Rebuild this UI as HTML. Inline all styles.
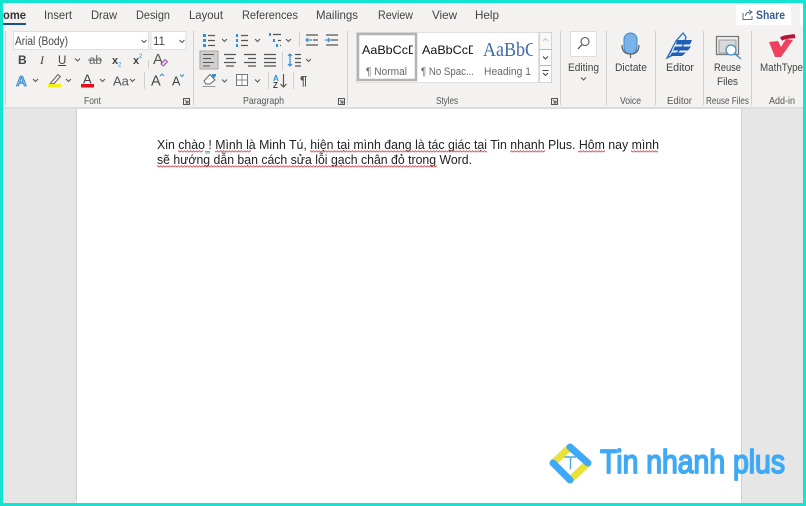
<!DOCTYPE html>
<html><head><meta charset="utf-8"><style>
html,body{margin:0;padding:0;background:#e6e6e6}
svg{display:block;font-family:"Liberation Sans",sans-serif}
.t{font-size:12px;fill:#444}
.s{font-size:10.5px;fill:#555}
.r{font-size:11px;fill:#444}
.d{font-size:13px;fill:#222}
.c{fill:none;stroke:#555;stroke-width:1}
.i{fill:none;stroke:#555;stroke-width:1.2}
.b{fill:none;stroke:#2f8fd8;stroke-width:1.6}
.sep{stroke:#d2d0ce;stroke-width:1}
</style></head><body>
<svg width="806" height="506" viewBox="0 0 806 506" xmlns="http://www.w3.org/2000/svg">
<defs>
<pattern id="sq" width="3" height="3" patternUnits="userSpaceOnUse"><path d="M0 2.200L1.500 .7L3 2.200" fill="none" stroke="#d9484f" stroke-width=".9"/></pattern>
</defs>
<rect width="806" height="506" fill="#e6e6e6"/>
<rect x="77" y="108" width="664" height="398" fill="#fff"/>
<path d="M76.500 108V500M741.500 108V500" stroke="#cfcfcf"/>
<rect x="0" y="0" width="806" height="107" fill="#f3f2f1"/>
<rect x="0" y="107" width="806" height="2" fill="#dcdcdc"/>

<!-- tabs -->
<text x="3" y="19" class="t" style="font-weight:bold;fill:#333" textLength="23" lengthAdjust="spacingAndGlyphs">ome</text>
<rect x="3" y="23" width="23" height="2" fill="#1f4f93"/>
<text x="44" y="19" class="t" textLength="28" lengthAdjust="spacingAndGlyphs">Insert</text>
<text x="91" y="19" class="t" textLength="26" lengthAdjust="spacingAndGlyphs">Draw</text>
<text x="136" y="19" class="t" textLength="34" lengthAdjust="spacingAndGlyphs">Design</text>
<text x="189" y="19" class="t" textLength="34" lengthAdjust="spacingAndGlyphs">Layout</text>
<text x="242" y="19" class="t" textLength="56" lengthAdjust="spacingAndGlyphs">References</text>
<text x="316" y="19" class="t" textLength="42" lengthAdjust="spacingAndGlyphs">Mailings</text>
<text x="378" y="19" class="t" textLength="35" lengthAdjust="spacingAndGlyphs">Review</text>
<text x="432" y="19" class="t" textLength="25" lengthAdjust="spacingAndGlyphs">View</text>
<text x="475" y="19" class="t" textLength="24" lengthAdjust="spacingAndGlyphs">Help</text>

<!-- share -->
<rect x="736" y="5" width="55" height="20" rx="1" fill="#fff"/>
<rect x="800" y="5" width="4" height="20" fill="#fff"/>
<path d="M743 13V19.500H752V16M745.500 16C745.500 13 748 12 751 12M749 10L752 12L749 14.500" fill="none" stroke="#5a6f8c" stroke-width="1"/>
<text x="756" y="19" style="font-size:12px;font-weight:bold;fill:#3a5f94" textLength="29" lengthAdjust="spacingAndGlyphs">Share</text>

<!-- separators -->
<path class="sep" d="M5.500 31V105M193.500 31V105M347.500 31V105M560.500 31V105M606.500 31V105M655.500 31V105M703.500 31V105M751.500 31V105"/>
<path class="sep" d="M148.500 60V69M144.500 72V89M299.500 32V47M282.500 52V70M268.500 72V89M293.500 72V89"/>

<!-- font -->
<rect x="13.500" y="31.500" width="135" height="18" fill="#fff" stroke="#e1dfdd"/>
<rect x="151" y="31.500" width="35" height="18" fill="#fff" stroke="#e1dfdd"/>
<text x="15" y="45" style="font-size:11.500px;fill:#444" textLength="53" lengthAdjust="spacingAndGlyphs">Arial (Body)</text>
<text x="153" y="45" style="font-size:11.500px;fill:#444">11</text>
<path class="c" d="M141.500 40L144 42.500L146.500 40M179.500 40L182 42.500L184.500 40"/>
<text x="18" y="64" style="font-size:12px;font-weight:bold;fill:#444">B</text>
<text x="40" y="64" style="font-size:12px;font-style:italic;font-family:'Liberation Serif',serif;fill:#444">I</text>
<text x="58" y="64" style="font-size:11.500px;fill:#444">U</text>
<path d="M58 65.500H66" stroke="#444"/>
<path class="c" d="M75 58.500L77.500 61L80 58.500"/>
<text x="89" y="64" style="font-size:11.500px;fill:#666">ab</text>
<path d="M88 60H102" stroke="#666"/>
<text x="112" y="64" style="font-size:11px;font-weight:bold;fill:#444">x</text>
<text x="118" y="66.500" style="font-size:6px;fill:#2f8fd8">2</text>
<text x="133" y="64" style="font-size:11px;font-weight:bold;fill:#444">x</text>
<text x="139" y="58" style="font-size:6px;fill:#2f8fd8">2</text>
<text x="153" y="64" style="font-size:15px;fill:#555">A</text>
<path d="M161 64L165 59.500L167.500 61.500L163.500 66Z" fill="#e8d8f0" stroke="#a04ca8"/>

<text x="16" y="86" style="font-size:15px;font-weight:bold;fill:#7fc0ee;stroke:#1d6fb8;stroke-width:.6">A</text>
<path class="c" d="M33 79L35.500 81.500L38 79M66 79L68.500 81.500L71 79M100 79L102.500 81.500L105 79M130 79L132.500 81.500L135 79"/>
<path d="M51 82.500L58 74.500L60.500 76.500L54 83.500L50 84Z" fill="none" stroke="#666"/>
<rect x="48" y="84" width="13" height="3.500" fill="#f4f01c"/>
<text x="83" y="83.500" style="font-size:13px;fill:#444">A</text>
<rect x="81" y="84" width="13" height="3.500" fill="#e4101c"/>
<text x="113" y="85.500" style="font-size:13px;fill:#555">Aa</text>
<text x="151" y="85.500" style="font-size:14.500px;fill:#444">A</text>
<path d="M160 76L162 74L164 76" fill="none" stroke="#2f8fd8"/>
<text x="172" y="85.500" style="font-size:12.500px;fill:#444">A</text>
<path d="M180 74.500L182 76.500L184 74.500" fill="none" stroke="#2f8fd8"/>
<text x="84" y="104" class="s" textLength="17" lengthAdjust="spacingAndGlyphs">Font</text>
<path class="c" d="M183.500 98.500H189.500V104.500H183.500ZM185 100L188 103M188 100.500V103H185.500"/>

<!-- paragraph -->
<g>
<path d="M203 34h3v3h-3zM203 39h3v3h-3zM203 44h3v3h-3z" fill="#2f8fd8"/>
<path class="i" d="M208 35.500H215M208 40.500H215M208 45.500H215"/>
<path class="c" d="M222 39L224.500 41.500L227 39M255 39L257.500 41.500L260 39M286 39L288.500 41.500L291 39"/>
<path d="M236 34h2v3h-2zM236 39h2v3h-2zM236 44h2v3h-2z" fill="#2f8fd8"/>
<path class="i" d="M241 35.500H248M241 40.500H248M241 45.500H248"/>
<path d="M269 33h2v3h-2zM273 39h2v3h-2zM276 44h2v3h-2z" fill="#2f8fd8"/>
<path class="i" d="M273 34.500H281M278 40.500H281M280 45.500H281"/>
<path class="i" d="M313 35H318M313 40H318M306 35H318M306 45H318"/>
<path class="i" d="M312 40H306M308 38L306 40L308 42" style="stroke:#2f8fd8"/>
<path class="i" d="M326 35H338M331 40H338M326 45H338"/>
<path class="i" d="M325 40H330M328 38L330 40L328 42" style="stroke:#2f8fd8"/>
<rect x="200" y="51" width="18" height="18" fill="#d2d0ce" stroke="#a8a6a4"/>
<path d="M203 54.500H214M203 58.500H211M203 62.500H214M203 66H210" stroke="#555" stroke-width="1.100"/>
<path class="i" d="M224 54.500H236M226 58.500H234M224 62.500H236M226 66H234"/>
<path class="i" d="M244 54.500H256M248 58.500H256M244 62.500H256M248 66H256"/>
<path class="i" d="M264 54.500H276M264 58.500H276M264 62.500H276M264 66H276"/>
<path class="b" d="M290 54V66M288 56L290 54L292 56M288 64L290 66L292 64" style="stroke-width:1.200"/>
<path class="i" d="M295 54.500H301M295 58.500H301M295 62.500H301M295 66H301"/>
<path class="c" d="M306 59L308.500 61.500L311 59"/>
<path d="M204 81L210 74.500L215 80L210 84H206Z" fill="#fff" stroke="#666"/>
<path d="M212 76L214 78L216 76V74H212Z" fill="#2f8fd8"/>
<path d="M202.500 86.500H215.500" stroke="#999"/>
<path class="c" d="M222 79.500L224.500 82L227 79.500M255 79.500L257.500 82L260 79.500"/>
<rect x="236.500" y="74.500" width="11" height="11" fill="#fff" stroke="#777"/>
<path d="M242 74.500V85.500M236.500 80H247.500" stroke="#888"/>
<text x="273" y="81" style="font-size:8px;font-weight:bold;fill:#2f8fd8">A</text>
<text x="273" y="88" style="font-size:8px;font-weight:bold;fill:#444">Z</text>
<path class="i" d="M283.500 74V87M280.500 84L283.500 87L286.500 84"/>
<text x="300" y="85" style="font-size:13px;font-weight:bold;fill:#555">¶</text>
</g>
<text x="243" y="104" class="s" textLength="41" lengthAdjust="spacingAndGlyphs">Paragraph</text>
<path class="c" d="M338.500 98.500H344.500V104.500H338.500ZM340 100L343 103M343 100.500V103H340.500"/>

<!-- styles -->
<rect x="356.500" y="32.500" width="182" height="50" fill="#fff" stroke="#e1dfdd"/>
<rect x="358" y="34" width="58" height="46" fill="#fff" stroke="#b5b3b1" stroke-width="2.500"/>
<svg x="362" y="38" width="51" height="24"><text x="0" y="16" style="font-size:12px;fill:#111" textLength="62" lengthAdjust="spacingAndGlyphs">AaBbCcDd</text></svg>
<svg x="422" y="38" width="51" height="24"><text x="0" y="16" style="font-size:12px;fill:#111" textLength="62" lengthAdjust="spacingAndGlyphs">AaBbCcDd</text></svg>
<svg x="483" y="36" width="50" height="26"><text x="0" y="20" style="font-family:'Liberation Serif',serif;font-size:20px;fill:#3d6aa8" textLength="62" lengthAdjust="spacingAndGlyphs">AaBbCc</text></svg>
<text x="366" y="75" style="font-size:11px;fill:#666" textLength="41" lengthAdjust="spacingAndGlyphs">¶ Normal</text>
<text x="421" y="75" style="font-size:11px;fill:#666" textLength="53" lengthAdjust="spacingAndGlyphs">¶ No Spac...</text>
<text x="484" y="75" style="font-size:11px;fill:#666" textLength="47" lengthAdjust="spacingAndGlyphs">Heading 1</text>
<rect x="539.500" y="32.500" width="12" height="50" fill="#f8f8f8" stroke="#d6d4d2"/>
<path d="M539.500 49.500H551.500M539.500 65.500H551.500" stroke="#b8b6b4"/>
<rect x="540" y="50" width="11" height="15" fill="#fff"/><rect x="540" y="66" width="11" height="16" fill="#fff"/>
<path d="M543 41L545.500 38.500L548 41" fill="none" stroke="#c8c6c4"/>
<path d="M543 56.500L545.500 59L548 56.500" fill="none" stroke="#444"/>
<path d="M542.500 70.500H548.500M543 73L545.500 75.500L548 73" fill="none" stroke="#444"/>
<text x="436" y="104" class="s" textLength="22" lengthAdjust="spacingAndGlyphs">Styles</text>
<path class="c" d="M551.500 98.500H557.500V104.500H551.500ZM553 100L556 103M556 100.500V103H553.500"/>

<!-- editing -->
<rect x="570.500" y="31.500" width="26" height="25" fill="#fff" stroke="#e1dfdd"/>
<circle cx="585" cy="41.500" r="4" fill="none" stroke="#555" stroke-width="1.100"/>
<path d="M582 44.500L578 49" stroke="#555" stroke-width="1.300"/>
<text x="568" y="71" class="r" textLength="31" lengthAdjust="spacingAndGlyphs">Editing</text>
<path class="c" d="M581 77.500L583.500 80L586 77.500"/>

<!-- dictate -->
<rect x="624" y="33" width="13" height="21" rx="6.500" fill="#79b2e6" stroke="#3f87cc"/>
<path d="M622 45C622 51 625 54 630.500 54C636 54 639 51 639 45M630.500 54V58" fill="none" stroke="#666" stroke-width="1.300"/>
<text x="615" y="71" class="r" textLength="32" lengthAdjust="spacingAndGlyphs">Dictate</text>
<text x="620" y="104" class="s" textLength="21" lengthAdjust="spacingAndGlyphs">Voice</text>

<!-- editor -->
<path d="M667 58L676 41L683 33L686 37C684 46 679 53 671 56Z" fill="#eaf2fb" stroke="#2a6cc0" stroke-width="1.300"/>
<path d="M677 40H692L690 44.500H676ZM675 46.500H691L688 50.500H673ZM672 52.500H686L682 56H670Z" fill="#1f5fb8"/>
<path d="M667 58L672 50" stroke="#2a6cc0"/>
<text x="666" y="71" class="r" textLength="28" lengthAdjust="spacingAndGlyphs">Editor</text>
<text x="667" y="104" class="s" textLength="25" lengthAdjust="spacingAndGlyphs">Editor</text>

<!-- reuse -->
<rect x="716.500" y="36.500" width="22" height="18" fill="#f3f2f1" stroke="#777" stroke-width="1.300"/>
<rect x="719" y="40" width="17" height="13" fill="#d8d8d8" stroke="#999"/>
<circle cx="731" cy="50" r="5" fill="#fff" stroke="#3f8fd0" stroke-width="1.300"/>
<path d="M735 54L741 59" stroke="#3f8fd0" stroke-width="1.400"/>
<text x="714" y="71" class="r" textLength="27" lengthAdjust="spacingAndGlyphs">Reuse</text>
<text x="717" y="85" class="r" textLength="21" lengthAdjust="spacingAndGlyphs">Files</text>
<text x="706" y="104" class="s" textLength="43" lengthAdjust="spacingAndGlyphs">Reuse Files</text>

<!-- mathtype -->
<path d="M769 42L778 41L781 47L786 39L793 40L781 57H775Z" fill="#f04060"/>
<path d="M781 39C786 36 791 37 795 36" fill="none" stroke="#b81238" stroke-width="4"/>
<text x="760" y="71" class="r" textLength="43" lengthAdjust="spacingAndGlyphs">MathType</text>
<text x="769" y="104" class="s" textLength="26" lengthAdjust="spacingAndGlyphs">Add-in</text>

<!-- document -->
<text x="157" y="149" class="d" textLength="502" lengthAdjust="spacingAndGlyphs">Xin chào ! Mình là Minh Tú, hiện tại mình đang là tác giác tại Tin nhanh Plus. Hôm nay mình</text>
<text x="157" y="164" class="d" textLength="315" lengthAdjust="spacingAndGlyphs">sẽ hướng dẫn bạn cách sửa lỗi gạch chân đỏ trong Word.</text>
<g fill="url(#sq)">
<rect x="178" y="150" width="25" height="3"/>
<rect x="215" y="150" width="36" height="3"/>
<rect x="310" y="150" width="177" height="3"/>
<rect x="510" y="150" width="35" height="3"/>
<rect x="578" y="150" width="27" height="3"/>
<rect x="631" y="150" width="27" height="3"/>
<rect x="157" y="165" width="280" height="3"/>
</g>
<path d="M205 151.500H210M205 153H210" stroke="#4a7fc8" stroke-width=".8"/>

<!-- logo -->
<path d="M570 447L588 463L570 480L552 463Z" fill="#fff"/>
<g fill="none" stroke-width="7" stroke-linecap="round">
<path d="M570 447L553 463M570 480L588 463" stroke="#e9e235"/>
<path d="M570 447L588 463M570 480L553 463" stroke="#3fa9f5"/>
</g>
<path d="M564.500 457H576M570.500 457V469" stroke="#4aa8ea" stroke-width="1.400" fill="none"/>
<text x="600" y="473" style="font-size:33px;fill:#3fa9f5;stroke:#3fa9f5;stroke-width:1.700;stroke-linejoin:round" textLength="185" lengthAdjust="spacingAndGlyphs">Tin nhanh plus</text>

<!-- teal frame -->
<rect x="0" y="0" width="806" height="3" fill="#14e3cf"/>
<rect x="0" y="503" width="806" height="3" fill="#14e3cf"/>
<rect x="0" y="0" width="3" height="506" fill="#14e3cf"/>
<rect x="803" y="0" width="3" height="506" fill="#14e3cf"/>
</svg>
</body></html>
